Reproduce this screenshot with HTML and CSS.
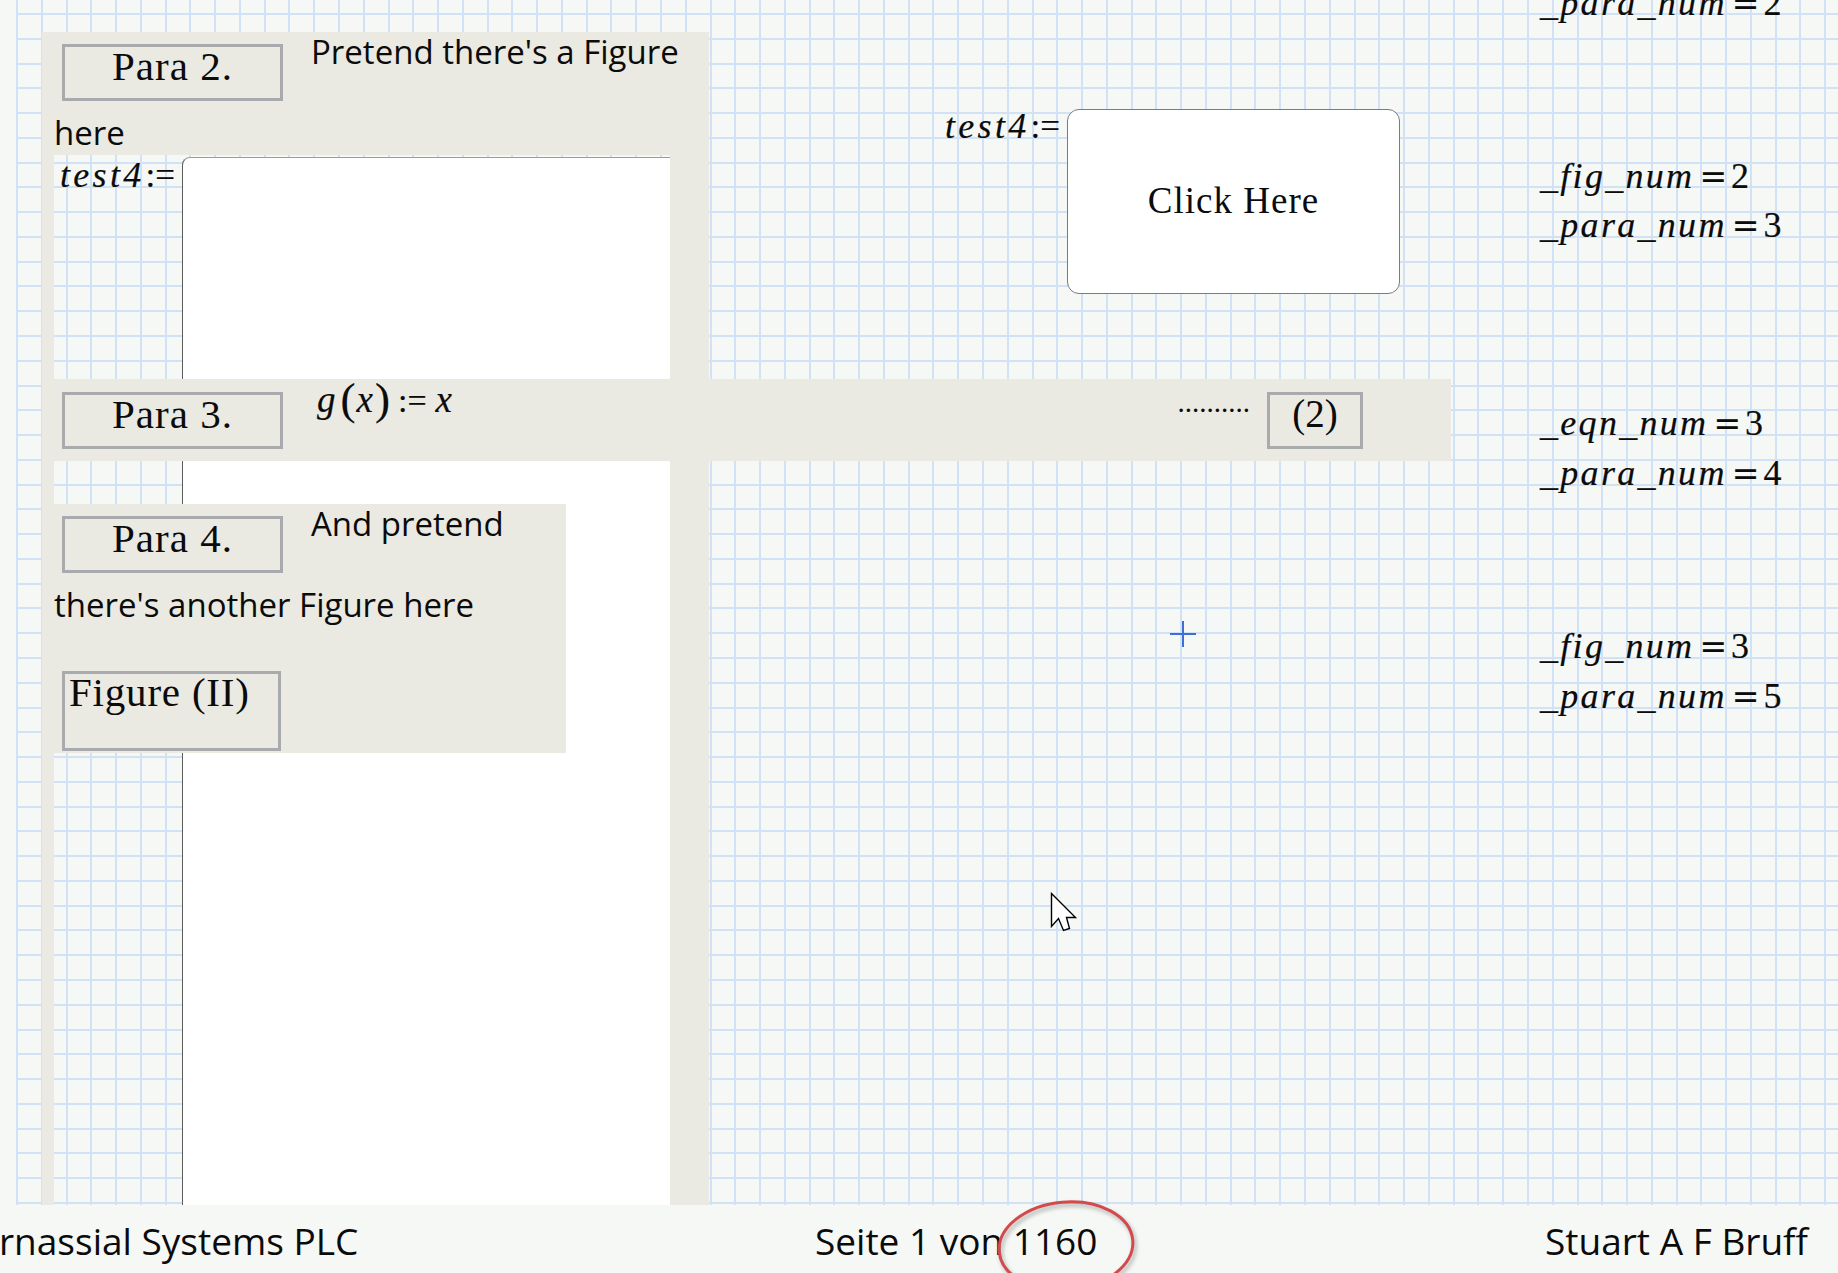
FILE: index.html
```html
<!DOCTYPE html>
<html>
<head>
<meta charset="utf-8">
<title>Worksheet</title>
<link rel="stylesheet" href="styles.css">
</head>
<body>
<div class="app">
  <div class="sheet">
    <div class="grid"></div>
    <div class="picture"></div>
    <div class="frame frame-left"></div>
    <div class="frame frame-right"></div>

    <div class="region-text r-para2"><span class="para-box">Para 2.</span>Pretend there's a Figure here</div>

    <div class="m eq eq-test-left"><i>test4</i><span class="assign">:=</span></div>

    <div class="region-text r-para3">
      <span class="para-box p3">Para 3.</span>
      <div class="m expr"><i>g</i><span class="paren p-open">(</span><i>x</i><span class="paren p-close">)</span><span class="assign a2">:=</span><i>x</i></div>
      <div class="eqnum"><span class="dots">..........</span><span class="eq-box">(2)</span></div>
    </div>

    <div class="region-text r-para4"><span class="para-box">Para 4.</span>And pretend there's another Figure here<span class="fig-box">Figure (II)</span></div>

    <div class="m eq eq-test-right"><i>test4</i><span class="assign">:=</span></div>
    <div class="click">Click Here</div>

    <div class="m eq col eq-1"><i>_para_num</i><span class="eqop">=</span><span class="num">2</span></div>
    <div class="m eq col eq-2"><i>_fig_num</i><span class="eqop">=</span><span class="num">2</span></div>
    <div class="m eq col eq-3"><i>_para_num</i><span class="eqop">=</span><span class="num">3</span></div>
    <div class="m eq col eq-4"><i>_eqn_num</i><span class="eqop">=</span><span class="num">3</span></div>
    <div class="m eq col eq-5"><i>_para_num</i><span class="eqop">=</span><span class="num">4</span></div>
    <div class="m eq col eq-6"><i>_fig_num</i><span class="eqop">=</span><span class="num">3</span></div>
    <div class="m eq col eq-7"><i>_para_num</i><span class="eqop">=</span><span class="num">5</span></div>

    <svg class="crosshair" width="28" height="28" viewBox="0 0 28 28">
      <line x1="14" y1="1" x2="14" y2="27" stroke="#3d6fd4" stroke-width="2"/>
      <line x1="1" y1="14" x2="27" y2="14" stroke="#3d6fd4" stroke-width="2"/>
    </svg>

    <svg class="pointer" width="28" height="42" viewBox="0 0 28 42">
      <path d="M1.5 1.5 L1.5 34.5 L8.5 26.5 L13.5 38.5 L19.5 36.5 L16.5 25.5 L25.5 25.5 Z" fill="#fff" stroke="#000" stroke-width="1.4" stroke-linejoin="miter"/>
    </svg>
  </div>

  <footer class="footer">
    <span class="f-left">rnassial Systems PLC</span>
    <span class="f-center">Seite 1 von 1160</span>
    <span class="f-right">Stuart A F Bruff</span>
    <svg class="ring" width="180" height="100" viewBox="0 0 180 100">
      <ellipse cx="86" cy="55" rx="67" ry="44" transform="rotate(-5 86 55)" fill="none" stroke="#d44a4c" stroke-width="3"/>
    </svg>
  </footer>
</div>
</body>
</html>
```

FILE: styles.css
```css
* { box-sizing: border-box; }

html, body {
  margin: 0;
  padding: 0;
}

body {
  width: 1838px;
  height: 1273px;
  overflow: hidden;
  background: #f6f8f6;
  font-family: "Open Sans", "Noto Sans", sans-serif;
  color: #0b0b0b;
}

.app {
  display: flex;
  flex-direction: column;
  height: 1273px;
}

/* ---------- worksheet canvas ---------- */
.sheet {
  position: relative;
  flex: none;
  height: 1205px;
  overflow: hidden;
  background: #f6f8f6;
}

.grid {
  position: absolute;
  left: 16px;
  top: 0;
  right: 0;
  bottom: 0;
  background-image:
    repeating-linear-gradient(to right, #d1e2f7 0, #d1e2f7 2px, transparent 2px, transparent 24.77px),
    repeating-linear-gradient(to bottom, #d1e2f7 0, #d1e2f7 2px, transparent 2px, transparent 24.77px);
  background-position: 0 0, 0 13px;
}

.frame {
  position: absolute;
  background: #eae9e2;
}

.frame-left {
  left: 42px;
  top: 32px;
  width: 12px;
  bottom: 0;
}

.frame-right {
  left: 670px;
  top: 32px;
  width: 39px;
  bottom: 0;
}

.picture {
  position: absolute;
  left: 182px;
  top: 157px;
  width: 500px;
  bottom: -10px;
  background: #fff;
  border-left: 1px solid #5c5c5c;
  border-top: 1px solid #9c9c9c;
  border-top-left-radius: 8px;
}

/* ---------- text regions ---------- */
.region-text {
  position: absolute;
  background: #eae9e2;
  font-size: 33px;
  line-height: 40px;
}

.r-para2 {
  left: 42px;
  top: 32px;
  width: 667px;
  height: 123px;
  padding-left: 12px;
}

.r-para3 {
  left: 54px;
  top: 379px;
  width: 1397px;
  height: 82px;
  display: flex;
  align-items: flex-start;
}

.r-para4 {
  left: 54px;
  top: 504px;
  width: 512px;
  height: 249px;
}

.para-box {
  display: inline-block;
  vertical-align: top;
  width: 221px;
  height: 57px;
  margin: 12px 28px 12px 8px;
  border: 3px solid #a9aaae;
  font-family: "Liberation Serif", serif;
  font-size: 41px;
  line-height: 38px;
  letter-spacing: 1px;
  text-align: center;
}

.para-box.p3 {
  flex: none;
  margin: 13px 34px 0 8px;
}

.fig-box {
  display: block;
  width: 219px;
  height: 80px;
  margin: 46px 0 0 8px;
  padding-left: 4px;
  border: 3px solid #a9aaae;
  font-family: "Liberation Serif", serif;
  font-size: 41px;
  line-height: 36px;
  letter-spacing: 0.8px;
}

/* ---------- math ---------- */
.m {
  font-family: "Liberation Serif", serif;
  font-size: 36px;
  line-height: 40px;
  white-space: nowrap;
  -webkit-text-stroke: 0.2px #0b0b0b;
}

.m i {
  font-style: italic;
  letter-spacing: 3.3px;
}

.col i {
  letter-spacing: 2.3px;
}

.assign {
  font-size: 35px;
  margin-left: 1px;
}

.eq {
  position: absolute;
}

.eq-test-left { left: 60px; top: 155px; }
.eq-test-right { left: 945px; top: 106px; }

.col { left: 1540px; }
.eq-1 { top: -17px; }
.eq-2 { top: 156px; }
.eq-3 { top: 205px; }
.eq-4 { top: 403px; }
.eq-5 { top: 453px; }
.eq-6 { top: 626px; }
.eq-7 { top: 676px; }

.eqop {
  font-family: "DejaVu Serif", serif;
  font-size: 33px;
  margin: 0 4px 0 5px;
}

.num { font-style: normal; }

.expr {
  flex: none;
  font-size: 35px;
}

.expr i {
  letter-spacing: 0;
  font-size: 37px;
}

.paren {
  font-size: 45px;
  vertical-align: -2px;
}

.p-open { margin: 0 1px 0 5px; }
.p-close { margin: 0 0 0 2px; }
.a2 { margin: 0 9px 0 8px; font-size: 34px; }

.eqnum {
  margin-left: auto;
  margin-right: 88px;
  display: flex;
  align-items: flex-start;
}

.dots {
  font-family: "Liberation Serif", serif;
  font-size: 29px;
  line-height: 29px;
  margin-top: 9px;
  margin-right: 17px;
}

.eq-box {
  display: block;
  width: 96px;
  height: 57px;
  margin-top: 13px;
  border: 3px solid #a9aaae;
  text-align: center;
  font-family: "Liberation Serif", serif;
  font-size: 39px;
  line-height: 38px;
}

/* ---------- button ---------- */
.click {
  position: absolute;
  left: 1067px;
  top: 109px;
  width: 333px;
  height: 185px;
  background: #fff;
  border: 1px solid #7b7b7b;
  border-radius: 12px;
  display: flex;
  align-items: center;
  justify-content: center;
  padding-bottom: 3px;
  font-family: "Liberation Serif", serif;
  font-size: 37px;
  letter-spacing: 1px;
}

/* ---------- overlays ---------- */
.crosshair {
  position: absolute;
  left: 1169px;
  top: 620px;
}

.pointer {
  position: absolute;
  left: 1050px;
  top: 892px;
}

/* ---------- footer ---------- */
.footer {
  position: relative;
  flex: none;
  height: 68px;
  display: flex;
  padding-top: 17px;
  background: #f6f8f5;
  font-size: 37px;
  line-height: 37px;
  white-space: nowrap;
}

.f-left {
  flex: none;
  width: 816px;
  margin-left: -1px;
}

.f-right {
  margin-left: auto;
  margin-right: 30px;
}

.ring {
  position: absolute;
  left: 980px;
  top: -14px;
  overflow: visible;
  filter: drop-shadow(2px 3px 2px rgba(0, 0, 0, 0.3));
}
```
